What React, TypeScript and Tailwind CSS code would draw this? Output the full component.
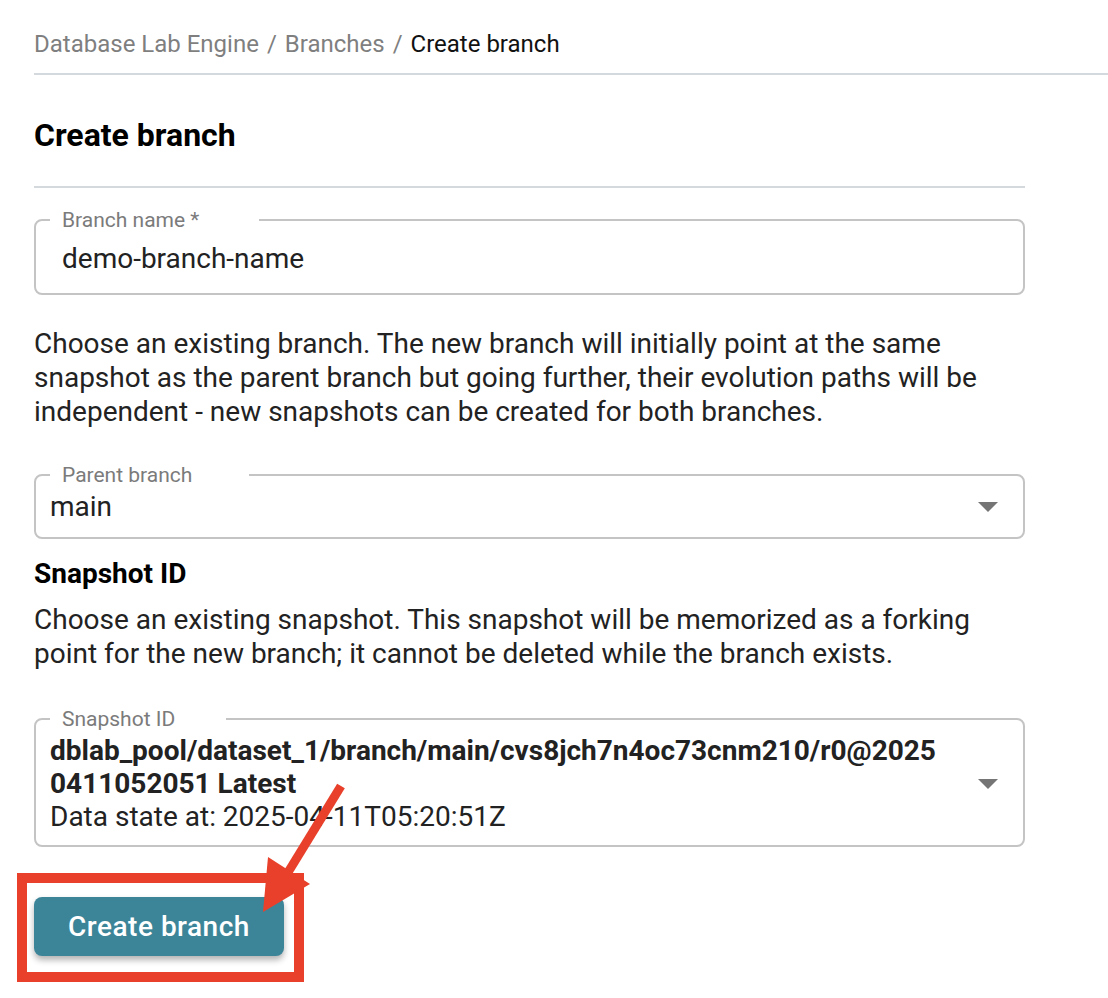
import type { ReactNode } from 'react'

const font = { fontFamily: 'Roboto, "Noto Sans", sans-serif' }

function CaretDown() {
  return (
    <svg width="20" height="10" viewBox="0 0 20 10" className="shrink-0">
      <path d="M0 0 L20 0 L10 10 Z" fill="#757575" />
    </svg>
  )
}

function OutlinedField({
  label,
  notch,
  children,
  className,
}: {
  label: string
  notch: string
  children: ReactNode
  className?: string
}) {
  return (
    <fieldset
      className={`rounded-[8px] border-2 border-[#c4c4c4] px-[14px] ${className ?? ''}`}
    >
      <legend className={`${notch} pl-[12px] text-[21px] leading-[24px] text-[#7b7b7b]`}>
        {label}
      </legend>
      {children}
    </fieldset>
  )
}

export default function App() {
  return (
    <div className="relative min-h-[998px] bg-white text-[#222222]" style={font}>
      <div className="pl-[34px]">
        <nav className="flex items-center gap-[8px] border-b-2 border-[#d3d9dc] pt-[29px] pb-[14px] text-[24px] leading-[30px]">
          <span className="text-[#7f7f7f]">Database Lab Engine</span>
          <span className="text-[#7f7f7f]">/</span>
          <span className="text-[#7f7f7f]">Branches</span>
          <span className="text-[#7f7f7f]">/</span>
          <span className="text-[#111111]">Create branch</span>
        </nav>

        <div className="w-[991px]">
          <h1 className="border-b-2 border-[#d3d9dc] pt-[42px] pb-[33px] text-[32px] leading-[36px] font-bold text-black">
            Create branch
          </h1>

          <OutlinedField label="Branch name *" notch="w-[209px]" className="mt-[20px] pb-[17px]">
            <div className="pl-[12px] pt-[10px] text-[28px] leading-[34px]">demo-branch-name</div>
          </OutlinedField>

          <p className="mt-[32px] text-[28px] leading-[34px]">
            Choose an existing branch. The new branch will initially point at the same snapshot as
            the parent branch but going further, their evolution paths will be independent - new
            snapshots can be created for both branches.
          </p>

          <OutlinedField label="Parent branch" notch="w-[199px]" className="mt-[34px] pb-[13px]">
            <div className="flex items-center justify-between pt-[3px] pr-[11px] text-[28px] leading-[34px]">
              <span>main</span>
              <CaretDown />
            </div>
          </OutlinedField>

          <h2 className="mt-[19px] text-[28px] leading-[32px] font-bold text-black">Snapshot ID</h2>

          <p className="mt-[13px] text-[28px] leading-[34px]">
            Choose an existing snapshot. This snapshot will be memorized as a forking point for the
            new branch; it cannot be deleted while the branch exists.
          </p>

          <OutlinedField label="Snapshot ID" notch="w-[176px]" className="mt-[36px] pb-[12px]">
            <div className="flex items-center justify-between pt-[3px] pr-[11px]">
              <div className="w-[892px] text-[28px] leading-[33px]">
                <div className="font-bold break-all">
                  dblab_pool/dataset_1/branch/main/cvs8jch7n4oc73cnm210/r0@20250411052051 Latest
                </div>
                <div>Data state at: 2025-04-11T05:20:51Z</div>
              </div>
              <CaretDown />
            </div>
          </OutlinedField>

          <button className="mt-[50px] h-[59px] w-[250px] rounded-[8px] bg-[#3c8599] text-[28px] font-medium tracking-[0.5px] text-white shadow-[0_4px_6px_rgba(0,0,0,0.3)]">
            Create branch
          </button>
        </div>
      </div>

      {/* annotation overlay */}
      <div className="pointer-events-none absolute left-[17px] top-[873px] h-[109px] w-[287px] border-[10px] border-[#e8402a]" />
      <svg
        className="pointer-events-none absolute left-0 top-0"
        width="1108"
        height="998"
        viewBox="0 0 1108 998"
      >
        <line x1="341" y1="786" x2="287" y2="874" stroke="#e8402a" strokeWidth="9" />
        <polygon points="263,912 268,857 310,884" fill="#e8402a" />
      </svg>
    </div>
  )
}
